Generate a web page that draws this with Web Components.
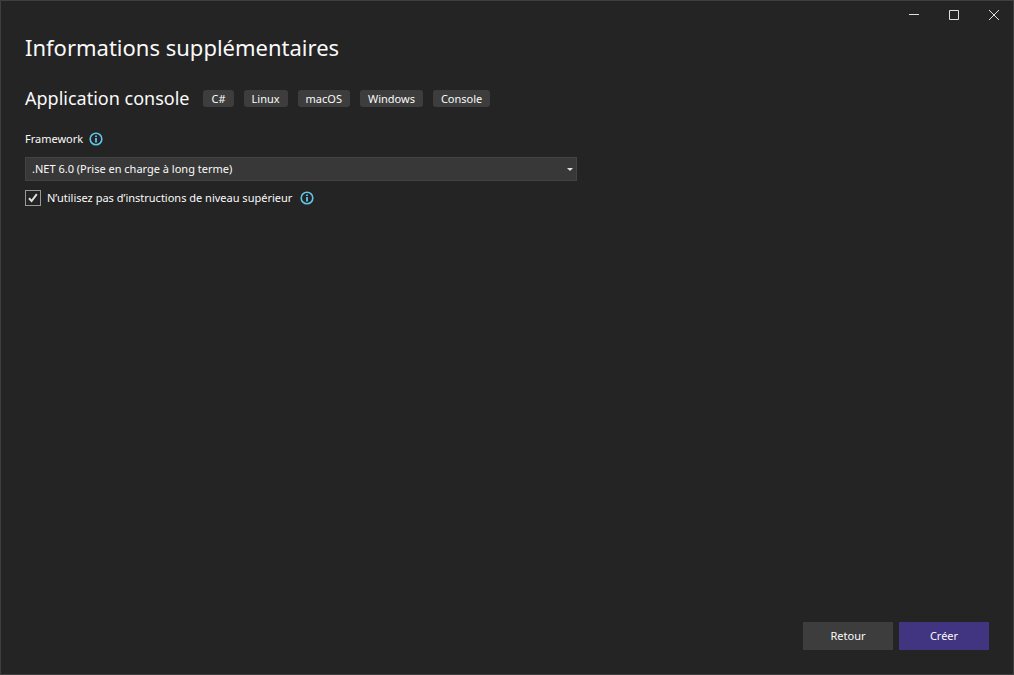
<!DOCTYPE html>
<html lang="fr">
<head>
<meta charset="utf-8">
<title>Informations supplémentaires</title>
<style>
  body {
    margin: 0;
    background: #242424;
    color: #fafafa;
    font: 11px/16px "Noto Sans", "Open Sans", sans-serif;
  }
</style>
</head>
<body>
<project-dialog>
  <template-summary name="Application console">
    <tag-chip>C#</tag-chip>
    <tag-chip>Linux</tag-chip>
    <tag-chip>macOS</tag-chip>
    <tag-chip>Windows</tag-chip>
    <tag-chip>Console</tag-chip>
  </template-summary>
  <framework-field></framework-field>
  <option-check>N’utilisez pas d’instructions de niveau supérieur</option-check>
  <dialog-button slot="actions">Retour</dialog-button>
  <dialog-button slot="actions" primary>Créer</dialog-button>
</project-dialog>

<script>
const define = (name, html) => customElements.define(name, class extends HTMLElement {
  constructor() {
    super();
    this.attachShadow({ mode: "open" }).innerHTML =
      html.replace("{{name}}", this.getAttribute("name") || "");
  }
});

define("window-controls", `
  <style>
    :host { display: flex; justify-content: flex-end; }
    button {
      display: grid; place-items: center;
      width: 40px; height: 30px; padding: 0;
      border: 0; background: none; color: #e0e0e0;
    }
    svg { display: block; fill: none; stroke: currentColor; }
  </style>
  <button aria-label="Réduire"><svg width="10" height="10"><path d="M0 4.5H10"/></svg></button>
  <button aria-label="Agrandir"><svg width="10" height="10"><path d="M.5 .5H9.5V9.5H.5Z"/></svg></button>
  <button aria-label="Fermer"><svg width="10" height="10"><path d="M0 0L10 10M10 0L0 10"/></svg></button>
`);

define("info-icon", `
  <style>
    :host { display: block; flex: none; color: #61c5ea; }
    svg { display: block; }
  </style>
  <svg width="14" height="14" viewBox="0 0 14 14" role="img" aria-label="Aide">
    <circle cx="7" cy="7" r="5.8" fill="none" stroke="currentColor" stroke-width="1.6"/>
    <path d="M6.1 3.4h1.8v1.6H6.1zM6.1 6h1.8v4.5H6.1z" fill="currentColor"/>
  </svg>
`);

define("tag-chip", `
  <style>
    :host {
      display: block; padding: 0 8px; border-radius: 3px;
      background: #3d3d3d; line-height: 17px;
    }
  </style>
  <slot></slot>
`);

define("template-summary", `
  <style>
    :host { display: flex; flex-wrap: wrap; align-items: center; gap: 8px 14px; }
    h2 { margin: 0; font-size: 18px; line-height: 25px; font-weight: 400; }
    div { display: flex; flex-wrap: wrap; gap: 10px; }
  </style>
  <h2>{{name}}</h2>
  <div><slot></slot></div>
`);

define("framework-field", `
  <style>
    :host { display: block; max-width: 552px; }
    .caption { display: flex; align-items: center; gap: 6px; }
    .box { display: grid; align-items: center; margin-top: 10px; }
    select, svg { grid-area: 1 / 1; }
    select {
      appearance: none; width: 100%; height: 24px; margin: 0; padding: 0 20px 0 6px;
      border: 1px solid #434343; border-radius: 0;
      background: #383838; color: inherit; font: inherit;
    }
    svg { justify-self: end; margin-right: 4px; pointer-events: none; }
  </style>
  <div class="caption"><label for="framework">Framework</label><info-icon></info-icon></div>
  <div class="box">
    <select id="framework"><option>.NET 6.0 (Prise en charge à long terme)</option></select>
    <svg width="6" height="3"><path d="M0 0H6L3 3Z" fill="#e0e0e0"/></svg>
  </div>
`);

define("option-check", `
  <style>
    :host { display: flex; align-items: center; gap: 8px; margin-top: 9px; }
    label { display: flex; align-items: center; gap: 6px; }
    .box { display: grid; }
    input, svg { grid-area: 1 / 1; }
    input {
      appearance: none; width: 16px; height: 16px; margin: 0;
      border: 1px solid #999; background: #242424;
    }
    svg { pointer-events: none; visibility: hidden; }
    input:checked + svg { visibility: visible; }
  </style>
  <label>
    <span class="box">
      <input type="checkbox" checked>
      <svg width="16" height="16"><path d="M4 8.2L6.6 11L11.8 4.2" fill="none" stroke="#e0e0e0" stroke-width="2"/></svg>
    </span>
    <span><slot></slot></span>
  </label>
  <info-icon></info-icon>
`);

define("dialog-button", `
  <style>
    :host { display: block; }
    button {
      min-width: 90px; height: 28px; padding: 0 12px;
      border: 0; background: #3d3d3d; color: inherit; font: inherit;
    }
    :host([primary]) button { background: #413480; }
  </style>
  <button><slot></slot></button>
`);

define("project-dialog", `
  <style>
    :host {
      display: flex; flex-direction: column; box-sizing: border-box; min-height: 100vh;
      outline: 1px solid #3f3f40; outline-offset: -1px;
    }
    main { flex: 1; padding: 2px 25px 25px; }
    h1 { margin: 0 0 24px; font-size: 22px; line-height: 30px; font-weight: 400; }
    ::slotted(framework-field) { margin-top: 20px; }
    footer { display: flex; justify-content: flex-end; gap: 6px; padding: 0 25px 25px; }
  </style>
  <window-controls></window-controls>
  <main>
    <h1>Informations supplémentaires</h1>
    <slot></slot>
  </main>
  <footer><slot name="actions"></slot></footer>
`);
</script>
</body>
</html>
